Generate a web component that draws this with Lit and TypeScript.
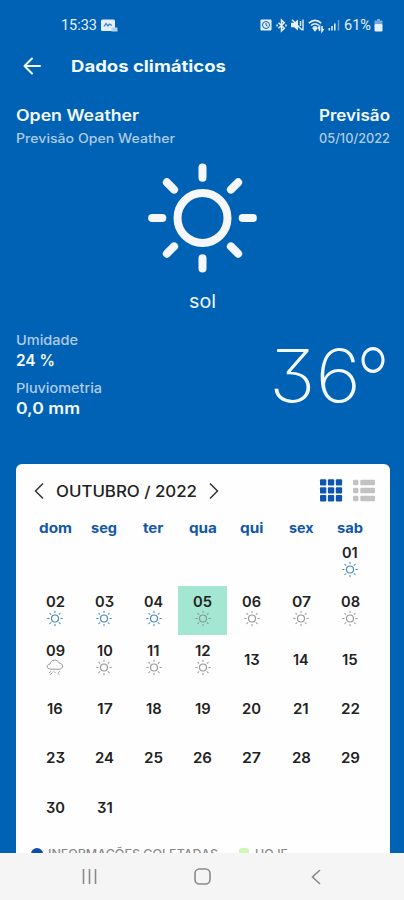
import { LitElement, html, svg, css, nothing } from "lit";
import { customElement } from "lit/decorators.js";

type Sky = "sun" | "rain" | "none";
interface Day { n: string; sky: Sky; collected?: boolean; today?: boolean }

/* A line of text stretched to a given width, vertically centred on its capitals. */
const label = (text: string, width: number, size: number, cls: string, height = 20) => html`
  <svg class="label" width=${width} height=${height}>
    <text class=${cls} x="0" y=${height / 2 + size * 0.364} font-size=${size}
      textLength=${width} lengthAdjust="spacingAndGlyphs">${text}</text>
  </svg>`;

const rays = (inner: number, outer: number) =>
  [0, 45, 90, 135, 180, 225, 270, 315].map(
    (a) => svg`<path d="M0 ${-inner}V${-outer}" transform="rotate(${a})"/>`
  );

const smallSun = html`
  <svg class="sky" width="18" height="17" viewBox="-9 -8.5 18 17">
    <circle r="3.5" stroke-width="1.2"/>${rays(5.9, 7.3)}
  </svg>`;

const smallRain = html`
  <svg class="sky" width="18" height="17" viewBox="0 0 18 17">
    <path d="M4.500 10.200C.2 10.200 0 5.200 4 5 4.700 .2 11.600 -.2 13 4 17.800 4.200 17.800 10 13.500 10.200Z"/>
    <path d="M4.500 12.500l-1 1.200M8 12.500l1.200 1.200M13.500 12.500l-1 1.200M6 14l-1.500 1.500M12 14.500l1 1"/>
  </svg>`;

const WEEKDAYS: [string, number][] = [
  ["dom", 33], ["seg", 26], ["ter", 20.5], ["qua", 28], ["qui", 23.5], ["sex", 24.5], ["sab", 26],
];

const DAYS: Day[] = Array.from({ length: 31 }, (_, i) => {
  const d = i + 1;
  return {
    n: String(d).padStart(2, "0"),
    sky: d === 9 ? "rain" : d <= 12 ? "sun" : "none",
    collected: d <= 4,
    today: d === 5,
  };
});

const numberWidth = (n: string) => [...n].reduce((w, c) => w + (c === "1" ? 6.2 : 9.5), 0);

@customElement("month-calendar")
export class MonthCalendar extends LitElement {
  static styles = css`
    :host { display: block; flex: 1; min-height: 0; overflow: hidden; background: #fefefe;
      border-radius: 6px 6px 0 0; margin: 0 14px 0 16px; }
    svg { display: block; flex: none; overflow: visible; }
    .label text { font-family: Inter, "Noto Sans", sans-serif; font-feature-settings: "cv09"; }
    .month { fill: #222; font-weight: 500; }
    .wd { fill: #1257a8; font-weight: 700; }
    .num { fill: #222; font-weight: 600; }
    .legend-text { fill: #8a8a8a; font-weight: 500; }
    .head { display: flex; align-items: center; height: 20px; padding: 17px 15px 0 18px; }
    .head .month-name { margin: 0 12px 0 12px; }
    .chev { fill: none; stroke: #333; stroke-width: 1.5; }
    .spacer { flex: 1; }
    .views { display: flex; gap: 11px; }
    .grid-view { fill: #0c55b0; }
    .list-view { fill: #c2c2c2; }
    .grid { display: grid; grid-template-columns: repeat(7, 49.2px); padding-left: 14.6px; }
    .week { height: 18px; margin-top: 18px; }
    .days { grid-auto-rows: 49.2px; }
    .cell { display: flex; flex-direction: column; align-items: center; justify-content: center; }
    .first { grid-column: 7; }
    .today { background: #a3e6d1; }
    .sky { fill: none; stroke: #999; stroke-width: 1; stroke-linecap: round; }
    .today .sky { stroke: #7d9c94; }
    .collected .sky { stroke: #4a88c0; }
    .legend { display: flex; align-items: center; height: 20px; margin-top: 12px; padding-left: 15px; }
    .dot { width: 12px; height: 12px; border-radius: 50%; background: #0c4fa8; margin-right: 5px; }
    .dot-today { width: 10px; height: 12px; border-radius: 3px; background: #cdf7b4; margin: 0 6px 0 21px; }
  `;

  render() {
    return html`
      <div class="head">
        <svg class="chev" width="10" height="17" viewBox="0 0 10 17"><path d="M9 .5 1.500 8 9 15.500"/></svg>
        <span class="month-name">${label("OUTUBRO / 2022", 141, 15.3, "month")}</span>
        <svg class="chev" width="10" height="17" viewBox="0 0 10 17"><path d="M1 .5 8.500 8 1 15.500"/></svg>
        <span class="spacer"></span>
        <div class="views">
          <svg class="grid-view" width="22" height="22" viewBox="0 0.700 22 22">
            ${[0, 7.9, 15.8].map((y) => [0, 7.9, 15.8].map((x) =>
              svg`<rect x=${x} y=${y} width="6.3" height="6.3" rx="1"/>`))}
          </svg>
          <svg class="list-view" width="22" height="22" viewBox="0 0.500 22 22">
            ${[0.3, 8.3, 16.3].map((y) => svg`
              <rect x="0" y=${y} width="5.500" height="5.500" rx="1.500"/>
              <rect x="7.300" y=${y} width="14.700" height="5.500" rx="1"/>`)}
          </svg>
        </div>
      </div>
      <div class="grid week">
        ${WEEKDAYS.map(([name, w]) => html`<div class="cell">${label(name, w, 13.6, "wd", 18)}</div>`)}
      </div>
      <div class="grid days">
        ${DAYS.map((d, i) => html`
          <div class="cell ${i === 0 ? "first" : ""} ${d.today ? "today" : ""} ${d.collected ? "collected" : ""}">
            ${label(d.n, numberWidth(d.n), 14.3, "num", 16)}
            ${d.sky === "sun" ? smallSun : d.sky === "rain" ? smallRain : nothing}
          </div>`)}
      </div>
      <div class="legend">
        <span class="dot"></span>${label("INFORMAÇÕES COLETADAS", 170, 11.5, "legend-text")}
        <span class="dot-today"></span>${label("HOJE", 33, 11.5, "legend-text")}
      </div>`;
  }
}

@customElement("app-root")
export class AppRoot extends LitElement {
  static styles = css`
    :host { display: flex; flex-direction: column; width: 404px; height: 900px; overflow: hidden;
      background: #0062b4; color: #fff; }
    svg { display: block; flex: none; overflow: visible; }
    .label text { font-family: Inter, "Noto Sans", sans-serif; font-feature-settings: "cv09"; fill: #f4f9ff; }
    .label .sys { font-family: Roboto, sans-serif; font-weight: 400; fill: #e6f0fa; }
    .bold { font-weight: 700; }
    .semi { font-weight: 600; }
    .regular { font-weight: 400; }
    .label .soft { font-weight: 500; fill: #b0cae6; }
    .thin { font-weight: 200; }
    .status { display: flex; align-items: center; height: 50px; padding: 0 21px 0 61px; }
    .status .glyph { fill: #e6f0fa; }
    .status .line { fill: none; stroke: #e6f0fa; }
    .spacer { flex: 1; }
    .photo { margin-left: 4px; }
    .icons { display: flex; align-items: center; gap: 4px; }
    .battery { margin-left: -1px; }
    .bar { display: flex; align-items: center; height: 32px; padding-left: 23px; gap: 30px; }
    .back { fill: none; stroke: #f4f9ff; stroke-width: 2; stroke-linecap: round; stroke-linejoin: round; }
    .source { display: flex; justify-content: space-between; padding: 23px 14px 0 16px; }
    .stack { display: flex; flex-direction: column; gap: 2px; }
    .right { align-items: flex-end; }
    .now { display: flex; flex-direction: column; align-items: center; margin-top: 15px; }
    .sun { fill: none; stroke: #f5f7fb; stroke-width: 8; stroke-linecap: round; }
    .sol { margin-top: 18px; }
    .stats { flex: none; display: flex; justify-content: space-between; height: 153px;
      padding: 19px 14px 0 16px; box-sizing: border-box; }
    .facts { display: flex; flex-direction: column; }
    .facts .pair + .pair { margin-top: 7px; }
    .temp { display: flex; margin-top: 15px; height: 60px; }
    .temp .label:first-child { margin-right: -5px; }
    .nav { flex: none; height: 47px; background: #f5f5f5; display: flex; align-items: center; padding: 0 83px 0 82px; }
    .nav .home { margin: 0 100px 0 97px; }
    .nav svg { fill: none; stroke: #8a8a8a; stroke-width: 1.6; }
  `;

  render() {
    return html`
      <div class="status">
        ${label("15:33", 36, 15, "sys")}
        <svg class="photo glyph" width="17" height="13" viewBox="0 0 17 13">
          <rect y="0.500" width="14" height="11.500" rx="1.500"/>
          <path d="M3 7.500 5 4.500 7 7 8.500 5 11 6.500" fill="none" stroke="#3a86c6" stroke-width="1.300"/>
          <path d="M10.500 8.500h6v4h-6z" fill="#b4d2ec"/>
        </svg>
        <span class="spacer"></span>
        <div class="icons">
          <svg width="12" height="12" viewBox="0 0 12 12">
            <rect class="glyph" x="0.500" y="0.500" width="11" height="11" rx="1"/>
            <circle cx="6" cy="6" r="3.500" fill="none" stroke="#0062b4" stroke-width="1"/>
            <path d="M6 4v2.300L7.500 7" fill="none" stroke="#0062b4"/>
          </svg>
          <svg class="line" width="11" height="13" viewBox="0 0 11 13" stroke-width="1.500">
            <path d="M2.500 3.800 8.300 9.200 5.500 12V1L8.300 3.800 2.500 9.200"/>
            <path d="M.3 6.500h1.600M9.200 6.500h1.600" stroke-width="2"/>
          </svg>
          <svg width="13" height="12" viewBox="0 0 13 12">
            <path class="glyph" d="M0 3.800h3L7 .5v11L3 8.200H0z"/>
            <path class="line" d="M1 .8 11 11M12 .5v11M9.500 2v5" stroke-width="1.400"/>
          </svg>
          <svg class="line" width="16" height="13" viewBox="0 0 16 13" stroke-width="1.600">
            <path d="M.8 4.200Q7 -1.500 13.200 4.200M3 6.500Q7 3 11 6.500M5.200 8.700Q7 7.200 8.800 8.700"/>
            <path d="M7 11.500 5.500 9.500h3zM11.500 12V7.500l-1.800 2M14 7v5l1.500-2"/>
          </svg>
          <svg class="line" width="12" height="12" viewBox="0 0 12 12" stroke-width="1.500">
            <path d="M1.300 11.500V9M4 11.500V7M6.800 11.500V4.500"/>
            <path d="M10.500 11.500V1" opacity="0.450"/>
          </svg>
          ${label("61%", 27, 15, "sys")}
          <svg class="battery glyph" width="9" height="13" viewBox="0 0 9 13">
            <path d="M3 0h3v1.500h2.500v4h-8v-4H3z" opacity="0.500"/>
            <rect x="0.500" y="5" width="8" height="7.500" rx="1.300"/>
          </svg>
        </div>
      </div>

      <div class="bar">
        <svg class="back" width="18" height="18" viewBox="0 0 18 18"><path d="M17 9H1.500M9 1.500 1.500 9 9 16.500"/></svg>
        ${label("Dados climáticos", 155, 16.3, "bold")}
      </div>

      <div class="source">
        <div class="stack">
          ${label("Open Weather", 123, 15.8, "semi", 21)}
          ${label("Previsão Open Weather", 159, 12.6, "soft")}
        </div>
        <div class="stack right">
          ${label("Previsão", 71, 15.8, "semi", 21)}
          ${label("05/10/2022", 71, 12.6, "soft")}
        </div>
      </div>

      <div class="now">
        <svg class="sun" width="110" height="110" viewBox="-55.500 -55 110 110">
          <circle r="25"/>${rays(40.2, 50.4)}
        </svg>
        <div class="sol">${label("sol", 27, 19, "regular")}</div>
      </div>

      <div class="stats">
        <div class="facts">
          <div class="pair">${label("Umidade", 62, 13.4, "soft")}${label("24 %", 39, 15.6, "semi", 21)}</div>
          <div class="pair">${label("Pluviometria", 86, 13.4, "soft")}${label("0,0 mm", 64, 15.6, "semi", 21)}</div>
        </div>
        <div class="temp">
          ${label("36", 92, 73, "thin", 60)}
          ${label("°", 34, 84, "thin", 66)}
        </div>
      </div>

      <month-calendar></month-calendar>

      <div class="nav">
        <svg width="15" height="16" viewBox="0 0 15 16"><path d="M1.500 0v15M7.500 0v15M13.500 0v15"/></svg>
        <svg class="home" width="17" height="17" viewBox="0 0 17 17"><rect x="1" y="1" width="15" height="15" rx="4.500"/></svg>
        <svg width="10" height="16" viewBox="0 0 10 16"><path d="M9 1 1.500 8 9 15"/></svg>
      </div>`;
  }
}
